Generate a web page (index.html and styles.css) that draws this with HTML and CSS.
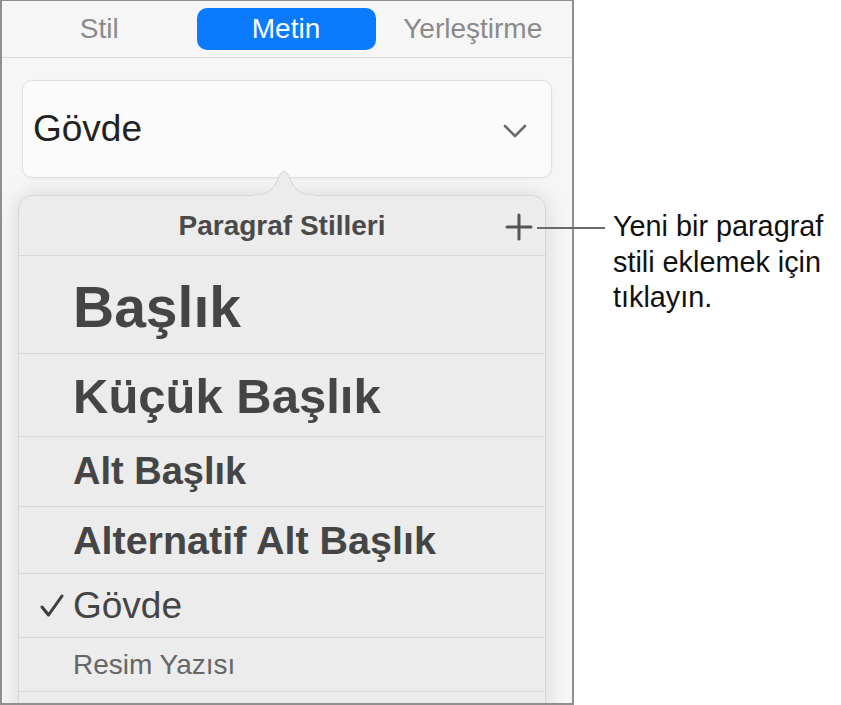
FILE: index.html
```html
<!DOCTYPE html>
<html lang="tr">
<head>
<meta charset="utf-8">
<title>Paragraf Stilleri</title>
<link rel="stylesheet" href="styles.css">
</head>
<body>
<div class="page">
  <div class="panel">
    <div class="tabbar">
      <div class="tab">Stil</div>
      <div class="tab active">Metin</div>
      <div class="tab">Yerleştirme</div>
    </div>
    <div class="select">
      <span class="select-label">Gövde</span>
      <svg class="chevron" width="24" height="14" viewBox="0 0 24 14"><polyline points="2,2 12,12 22,2" fill="none" stroke="#6a6a6a" stroke-width="2.6" stroke-linecap="round" stroke-linejoin="round"/></svg>
    </div>
    <div class="popover">
      <svg class="arrow" width="60" height="28" viewBox="0 0 60 28"><path d="M0 27 C13 27 17 23 22 15 L26.5 6 Q30 0 33.5 6 L38 15 C43 23 47 27 60 27" fill="#ececec" stroke="#d4d4d4" stroke-width="1"/><rect x="0" y="27" width="60" height="2" fill="#ececec"/></svg>
      <div class="pop-header">
        <span class="pop-title">Paragraf Stilleri</span>
        <svg class="plus" width="28" height="28" viewBox="0 0 28 28"><path d="M14 2 V26 M2 14 H26" stroke="#555" stroke-width="3" stroke-linecap="round"/></svg>
      </div>
      <div class="row r-title"><span class="mark"></span><span class="label">Başlık</span></div>
      <div class="row r-sub"><span class="mark"></span><span class="label">Küçük Başlık</span></div>
      <div class="row r-alt"><span class="mark"></span><span class="label">Alt Başlık</span></div>
      <div class="row r-alt2"><span class="mark"></span><span class="label">Alternatif Alt Başlık</span></div>
      <div class="row r-body"><span class="mark"><svg width="26" height="26" viewBox="0 0 26 26"><path d="M3 14 L9.5 22 L23 3" fill="none" stroke="#3c3c3c" stroke-width="3" stroke-linecap="round" stroke-linejoin="round"/></svg></span><span class="label">Gövde</span></div>
      <div class="row r-caption"><span class="mark"></span><span class="label">Resim Yazısı</span></div>
      <div class="row r-more"></div>
    </div>
  </div>
  <div class="callout">
    <span class="callout-line"></span>
    <p class="callout-text">Yeni bir paragraf<br>stili eklemek için<br>tıklayın.</p>
  </div>
</div>
</body>
</html>
```

FILE: styles.css
```css
* { box-sizing: border-box; }
html, body { margin: 0; padding: 0; background: #ffffff; }
body { font-family: "Liberation Sans", Arial, sans-serif; }

.page {
  position: relative;
  width: 841px;
  height: 705px;
  overflow: hidden;
}

.panel {
  width: 574px;
  height: 705px;
  background: #f6f6f6;
  border: 2px solid #8f8f8f;
  border-top-width: 1px;
  overflow: hidden;
  display: flex;
  flex-direction: column;
}

.tabbar {
  height: 57px;
  flex: none;
  display: grid;
  grid-template-columns: 1fr 179px 1fr;
  align-items: start;
  padding-top: 7px;
  padding-right: 2px;
  border-bottom: 1px solid #dddddd;
}
.tab {
  height: 42px;
  display: flex;
  align-items: center;
  justify-content: center;
  font-size: 28px;
  color: #8a8a8a;
}
.tab.active {
  background: #0a7aff;
  color: #ffffff;
  border-radius: 10px;
  font-weight: 500;
}

.select {
  flex: none;
  margin: 22px 20px 0 20px;
  height: 98px;
  background: #fbfbfb;
  border: 1px solid #e0e0e0;
  border-radius: 10px;
  box-shadow: 0 1px 3px rgba(0,0,0,0.04);
  display: flex;
  align-items: center;
  justify-content: space-between;
  padding: 0 24px 0 10px;
}
.select-label {
  font-size: 37px;
  color: #222222;
}
.chevron { margin-top: 4px; }

.popover {
  position: relative;
  flex: none;
  margin: 17px 0 0 16px;
  width: 528px;
  background: #ececec;
  border: 1px solid #d6d6d6;
  border-radius: 14px 14px 0 0;
  box-shadow: 0 0 22px rgba(0,0,0,0.13);
}
.arrow {
  position: absolute;
  left: 235px;
  top: -28px;
}

.pop-header {
  height: 60px;
  display: flex;
  align-items: center;
  justify-content: center;
  position: relative;
  border-bottom: 1px solid #d6d6d6;
}
.pop-title {
  font-size: 28px;
  font-weight: bold;
  color: #4a4a4a;
}
.plus {
  position: absolute;
  right: 12px;
  top: 17px;
}

.row {
  display: flex;
  align-items: center;
  padding-left: 18px;
  border-bottom: 1px solid #d6d6d6;
  color: #454545;
}
.mark {
  width: 36px;
  flex: none;
  display: flex;
  align-items: center;
}
.label { white-space: nowrap; }

.r-title { height: 98px; }
.r-title .label { font-size: 57px; font-weight: bold; margin-top: 4px; }
.r-sub { height: 83px; }
.r-sub .label { font-size: 49px; font-weight: bold; margin-top: 2px; }
.r-alt { height: 70px; }
.r-alt .label { font-size: 38px; font-weight: bold; }
.r-alt2 { height: 67px; }
.r-alt2 .label { font-size: 39.5px; font-weight: bold; }
.r-body { height: 64px; }
.r-body .label { font-size: 37px; color: #444444; }
.r-body .mark { margin-left: 2px; width: 34px; }
.r-caption { height: 54px; }
.r-caption .label { font-size: 28px; color: #666666; }
.r-more { height: 50px; }

.callout {
  position: absolute;
  left: 537px;
  top: 209px;
  display: flex;
  align-items: flex-start;
}
.callout-line {
  display: block;
  width: 68px;
  height: 2px;
  margin-top: 18px;
  background: #6a6a6a;
}
.callout-text {
  margin: 0 0 0 8px;
  font-size: 28.8px;
  line-height: 35.5px;
  color: #111111;
}
```
